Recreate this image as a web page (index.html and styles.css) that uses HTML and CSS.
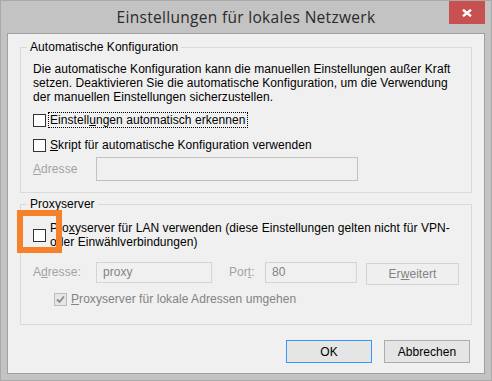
FILE: index.html
```html
<!DOCTYPE html>
<html lang="de">
<head>
    <meta charset="UTF-8">
    <meta name="viewport" content="width=device-width, initial-scale=1.0">
    <title>Einstellungen für lokales Netzwerk</title>
    <link rel="stylesheet" href="styles.css">
</head>
<body>
    <div class="window">
        <div class="titlebar">
            <span class="title">Einstellungen für lokales Netzwerk</span>
            <button class="close" aria-label="Schließen">
                <svg width="10" height="8" viewBox="0 0 10 8">
                    <path d="M1 0.8 L9 7.2 M9 0.8 L1 7.2" stroke="#fff" stroke-width="2.4" fill="none"/>
                </svg>
            </button>
        </div>

        <div class="client">
            <fieldset class="group group-auto">
                <legend>Automatische Konfiguration</legend>
                <p class="info">Die automatische Konfiguration kann die manuellen Einstellungen außer Kraft<br>setzen. Deaktivieren Sie die automatische Konfiguration, um die Verwendung<br>der manuellen Einstellungen sicherzustellen.</p>

                <div class="check-row first">
                    <span class="box"></span>
                    <span class="check-text focused">Einstell<u>u</u>ngen automatisch erkennen</span>
                </div>
                <div class="check-row second">
                    <span class="box"></span>
                    <span class="check-text"><u>S</u>kript für automatische Konfiguration verwenden</span>
                </div>
                <div class="field-row script-row">
                    <span class="field-label disabled"><u>A</u>dresse</span>
                    <span class="input input-script"></span>
                </div>
            </fieldset>

            <fieldset class="group group-proxy">
                <legend>Proxyserver</legend>
                <div class="check-row proxy-row">
                    <span class="box"></span>
                    <span class="check-text multi">Pro<u>x</u>yserver für LAN verwenden (diese Einstellungen gelten nicht für VPN-<br>oder Einwählverbindungen)</span>
                    <span class="highlight"></span>
                </div>
                <div class="field-row proxy-fields">
                    <span class="field-label disabled">A<u>d</u>resse:</span>
                    <span class="input input-address">proxy</span>
                    <span class="field-label port-label disabled">Por<u>t</u>:</span>
                    <span class="input input-port">80</span>
                    <button class="btn btn-advanced" disabled>Er<u>w</u>eitert</button>
                </div>
                <div class="check-row bypass-row">
                    <span class="box box-disabled">
                        <svg width="11" height="11" viewBox="0 0 11 11">
                            <path d="M2 5.5 L4.5 8 L9 2.5" stroke="#8a8a8a" stroke-width="1.8" fill="none"/>
                        </svg>
                    </span>
                    <span class="check-text disabled-dark"><u>P</u>roxyserver für lokale Adressen umgehen</span>
                </div>
            </fieldset>

            <div class="actions">
                <button class="btn btn-ok">OK</button>
                <button class="btn">Abbrechen</button>
            </div>
        </div>
    </div>
</body>
</html>
```

FILE: styles.css
```css
* {
    box-sizing: border-box;
}

body {
    margin: 0;
    font-family: 'Liberation Sans', Arial, sans-serif;
    font-size: 12px;
    letter-spacing: 0.06px;
    color: #000;
}

.window {
    width: 492px;
    height: 381px;
    background: #c3c3c3;
    border: 1px solid #a9a9a9;
    display: flex;
    flex-direction: column;
}

.titlebar {
    height: 32px;
    display: grid;
    grid-template-columns: 1fr auto 1fr;
    align-items: start;
}

.title {
    grid-column: 2;
    font-family: 'Open Sans', 'Noto Sans', sans-serif;
    font-size: 15.5px;
    letter-spacing: 0.3px;
    line-height: 20px;
    margin-top: 6px;
    color: #2b2b2b;
    white-space: nowrap;
}

.close {
    grid-column: 3;
    justify-self: end;
    width: 36px;
    height: 23px;
    margin-right: 6px;
    padding: 0;
    border: none;
    background: #c75050;
    display: flex;
    align-items: center;
    justify-content: center;
}

.client {
    flex: 1;
    margin: 0 6px 6px;
    padding: 6px 12px 0;
    background: #f0f0f0;
    border: 1px solid #a0a0a0;
}

.group {
    margin: 0;
    min-width: 0;
    border: 1px solid #dadada;
}

.group legend {
    padding: 0 3px;
    margin-left: -6px;
    line-height: 15px;
}

.group-auto {
    padding: 7px 12px 11px;
}

.group-proxy {
    margin-top: 4px;
    padding: 8px 12px 17px;
}

.info {
    margin: 0;
    line-height: 14px;
    white-space: nowrap;
}

.check-row {
    display: flex;
    align-items: center;
    height: 16px;
    position: relative;
}

.check-row.first {
    margin-top: 8px;
}

.check-row.second {
    margin-top: 9px;
}

.box {
    width: 13px;
    height: 13px;
    flex: none;
    border: 1px solid #333;
    background: #fff;
    display: flex;
    align-items: center;
    justify-content: center;
}

.box-disabled {
    border-color: #bcbcbc;
    background: #e6e6e6;
}

.check-text {
    margin-left: 2px;
    padding: 0 1px;
    border: 1px dotted transparent;
    line-height: 14px;
    white-space: nowrap;
}

.check-text.focused {
    border-color: #000;
}

.proxy-row {
    height: auto;
}

.highlight {
    position: absolute;
    left: -16px;
    top: -10px;
    width: 45px;
    height: 43px;
    border: 6px solid #f7812b;
}

.field-row {
    display: flex;
    align-items: center;
}

.script-row {
    margin-top: 4px;
}

.field-label {
    width: 63px;
    flex: none;
    white-space: nowrap;
}

.disabled {
    color: #a3a3a3;
}

.disabled-dark {
    color: #838383;
}

.input {
    height: 21px;
    border: 1px solid #d4d4d4;
    background: #f0f0f0;
    color: #838383;
    padding: 0 6px;
    line-height: 19px;
    flex: none;
}

.input-script {
    width: 262px;
    height: 24px;
    border-color: #c2c2c2;
}

.proxy-fields {
    margin-top: 12px;
    align-items: flex-start;
}

.proxy-fields .field-label {
    line-height: 21px;
}

.input-address {
    width: 116px;
}

.port-label.field-label {
    width: 36px;
    margin-left: 17px;
}

.input-port {
    width: 92px;
}

.btn {
    width: 86px;
    height: 23px;
    padding: 0;
    font-family: inherit;
    font-size: 12px;
    letter-spacing: inherit;
    color: #000;
    background: #e5e5e5;
    border: 1px solid #acacac;
}

.btn-advanced {
    width: 95px;
    height: 22px;
    margin-top: 1px;
    margin-left: 9px;
    color: #838383;
    background: #efefef;
    border-color: #d4d4d4;
}

.btn-ok {
    border-color: #3399ff;
}

.bypass-row {
    margin-top: 6px;
    padding-left: 21px;
}

.actions {
    display: flex;
    justify-content: flex-end;
    gap: 12px;
    margin-top: 15px;
    padding-right: 2px;
}
```
